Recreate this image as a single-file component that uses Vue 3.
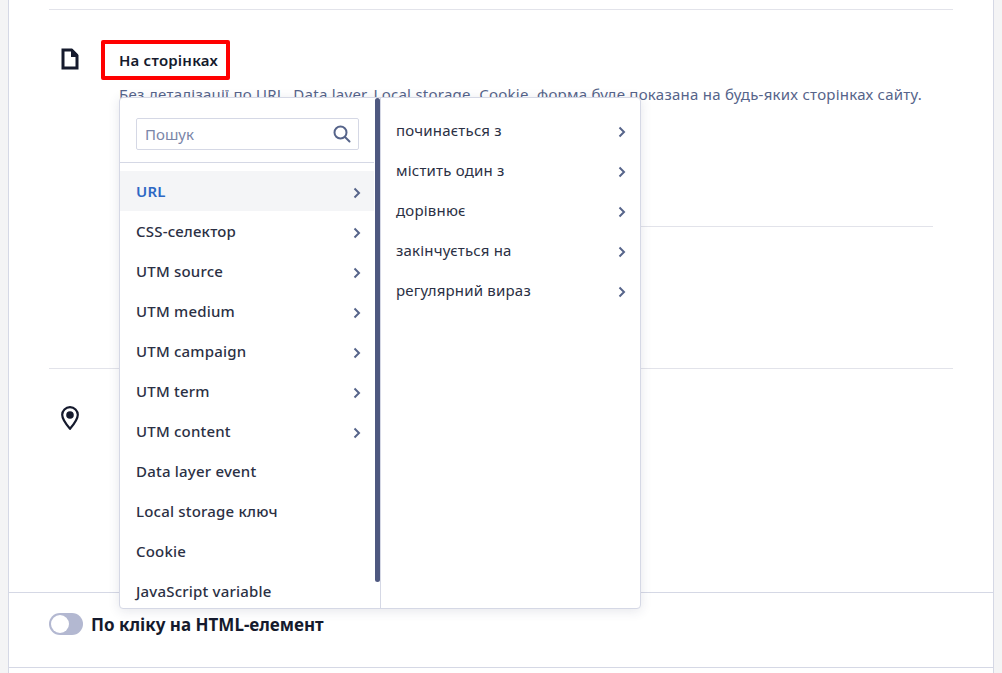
<script setup>
const sources = [
  { name: "URL", more: true, active: true },
  { name: "CSS-селектор", more: true },
  { name: "UTM source", more: true },
  { name: "UTM medium", more: true },
  { name: "UTM campaign", more: true },
  { name: "UTM term", more: true },
  { name: "UTM content", more: true },
  { name: "Data layer event" },
  { name: "Local storage ключ" },
  { name: "Cookie" },
  { name: "JavaScript variable" },
];

const conditions = [
  "починається з",
  "містить один з",
  "дорівнює",
  "закінчується на",
  "регулярний вираз",
];
</script>

<template>
  <div class="page">
    <div class="card">
      <div class="rules">
        <div class="rule rule-pages">
          <svg class="rule-icon" viewBox="0 0 18 22" width="18" height="22">
            <path
              d="M2 2h8.500L16 7.500V20H2z"
              fill="#fff"
              stroke="#151a2d"
              stroke-width="3"
              stroke-linejoin="miter"
            />
            <path d="M10 1h1.500L17 6.500V9h-7z" fill="#151a2d" />
          </svg>
          <div class="rule-body">
            <div class="rule-title">На сторінках</div>
            <p class="rule-desc">
              Без деталізації по URL, Data layer, Local storage, Cookie, форма буде показана на будь-яких сторінках сайту.
            </p>
            <div class="rule-divider"></div>
          </div>
        </div>
        <div class="rule rule-geo">
          <svg class="rule-icon" viewBox="0 0 20 26" width="20" height="26">
            <path
              d="M10 2.200c-4.400 0-7.800 3.400-7.800 7.600 0 4.600 4 9.600 7.800 14 3.800-4.400 7.800-9.400 7.800-14 0-4.200-3.400-7.600-7.800-7.600z"
              fill="none"
              stroke="#151a2d"
              stroke-width="2.200"
              stroke-linejoin="round"
            />
            <circle cx="10" cy="10" r="3.800" fill="#151a2d" />
          </svg>
        </div>
      </div>

      <div class="click-row">
        <span class="toggle"><span class="toggle-knob"></span></span>
        <span class="click-label">По кліку на HTML-елемент</span>
      </div>

      <!-- меню вибору умови -->
      <div class="menu">
        <div class="menu-left">
          <div class="search-wrap">
            <div class="search">
              <input class="search-input" type="text" placeholder="Пошук" />
              <svg viewBox="0 0 18 18" width="18" height="18" fill="none" stroke="#56648a" stroke-width="2" stroke-linecap="round">
                <circle cx="7.500" cy="7.500" r="6" />
                <line x1="12" y1="12" x2="16.500" y2="16.500" />
              </svg>
            </div>
          </div>
          <div class="source-list">
            <div
              v-for="item in sources"
              :key="item.name"
              class="source-item"
              :class="{ active: item.active }"
            >
              <span>{{ item.name }}</span>
              <svg v-if="item.more" class="chevron" viewBox="0 0 8 12" width="8" height="12" fill="none" stroke="#56648a" stroke-width="2">
                <polyline points="1.500 1.500 6 6 1.500 10.500" />
              </svg>
            </div>
          </div>
          <div class="scrollbar"></div>
        </div>
        <div class="menu-right">
          <div v-for="name in conditions" :key="name" class="condition-item">
            <span>{{ name }}</span>
            <svg class="chevron" viewBox="0 0 8 12" width="8" height="12" fill="none" stroke="#56648a" stroke-width="2">
              <polyline points="1.500 1.500 6 6 1.500 10.500" />
            </svg>
          </div>
        </div>
      </div>
    </div>
  </div>
</template>

<style>
html,
body {
  margin: 0;
  overflow: hidden;
}
</style>

<style scoped>
.page {
  height: 673px;
  padding: 0 8px;
  box-sizing: border-box;
  background: #f4f4f5;
  font-family: "Noto Sans", "Liberation Sans", sans-serif;
  color: #151a2d;
}

.card {
  position: relative;
  height: 673px;
  box-sizing: border-box;
  background: #fff;
  border-left: 1px solid #d5d8e5;
  border-right: 1px solid #d5d8e5;
}

.rules {
  height: 593px;
  box-sizing: border-box;
  padding: 9px 40px 0;
  border-bottom: 1px solid #d5d8e5;
}

.rule {
  display: flex;
  gap: 22px;
  border-top: 1px solid #e2e3ea;
}

.rule-pages {
  height: 359px;
  padding-top: 30px;
  box-sizing: border-box;
}

.rule-geo {
  padding-top: 36px;
}

.rule-icon {
  flex: none;
  margin-left: 12px;
  margin-top: 8px;
}

.rule-geo .rule-icon {
  margin-top: 0;
  margin-left: 11px;
}

.rule-body {
  flex: 1;
}

.rule-title {
  padding: 0 10px 0 14px;
  height: 40px;
  line-height: 32px;
  border: 4px solid #f00;
  border-radius: 2px;
  box-sizing: border-box;
  width: 129px;
  font-size: 15px;
  font-weight: 600;
  letter-spacing: 0.2px;
  white-space: nowrap;
}

.rule-desc {
  margin: 4px 0 0 18px;
  font-size: 15px;
  letter-spacing: 0.25px;
  line-height: 20px;
  color: #56648a;
  white-space: nowrap;
}

.rule-divider {
  margin: 122px 20px 0 18px;
  border-top: 1px solid #e2e3ea;
}

.click-row {
  display: flex;
  align-items: center;
  gap: 8px;
  height: 75px;
  padding: 0 40px 12px;
  box-sizing: border-box;
  border-bottom: 1px solid #d5d8e5;
}

.toggle {
  width: 34px;
  height: 22px;
  border-radius: 11px;
  background: #b3b8d1;
  display: flex;
  align-items: center;
  padding-left: 2px;
  box-sizing: border-box;
}

.toggle-knob {
  width: 18px;
  height: 18px;
  border-radius: 50%;
  background: #fff;
}

.click-label {
  font-size: 17px;
  font-weight: 700;
}

.menu {
  position: absolute;
  left: 110px;
  top: 97px;
  width: 522px;
  height: 512px;
  display: flex;
  background: #fff;
  border: 1px solid #d5d8e5;
  border-radius: 4px;
  box-sizing: border-box;
  box-shadow: 0 2px 12px rgba(40, 50, 90, 0.12);
  overflow: hidden;
}

.menu-left {
  position: relative;
  width: 261px;
  flex: none;
  border-right: 1px solid #d5d8e5;
  box-sizing: border-box;
  overflow: hidden;
}

.search-wrap {
  padding: 20px 15px 12px 16px;
  border-bottom: 1px solid #d5d8e5;
  margin-right: 6px;
}

.search {
  display: flex;
  align-items: center;
  height: 32px;
  box-sizing: border-box;
  border: 1px solid #d5d8e5;
  border-radius: 2px;
  padding: 0 7px 0 8px;
}

.search-input {
  flex: 1;
  min-width: 0;
  border: none;
  outline: none;
  padding: 0;
  font-family: inherit;
  font-size: 15px;
  color: #151a2d;
}

.search-input::placeholder {
  color: #7a86a8;
  opacity: 1;
}

.source-list {
  padding-top: 8px;
  margin-right: 6px;
}

.source-item {
  display: flex;
  align-items: center;
  justify-content: space-between;
  height: 40px;
  padding: 0 13px 0 16px;
  font-size: 15px;
  font-weight: 500;
  letter-spacing: 0.2px;
  color: #2b3044;
}

.source-item.active {
  background: #f4f5f7;
  color: #2d68c4;
  font-weight: 600;
}

.chevron {
  flex: none;
  margin-top: 4px;
}

.scrollbar {
  position: absolute;
  top: 0;
  right: 0;
  width: 5px;
  height: 484px;
  border-radius: 3px;
  background: #4e5880;
}

.menu-right {
  flex: 1;
  padding-top: 12px;
}

.condition-item {
  display: flex;
  align-items: center;
  justify-content: space-between;
  height: 40px;
  padding: 0 14px 0 15px;
  font-size: 15px;
  letter-spacing: 0.2px;
  color: #2b3044;
}
</style>
